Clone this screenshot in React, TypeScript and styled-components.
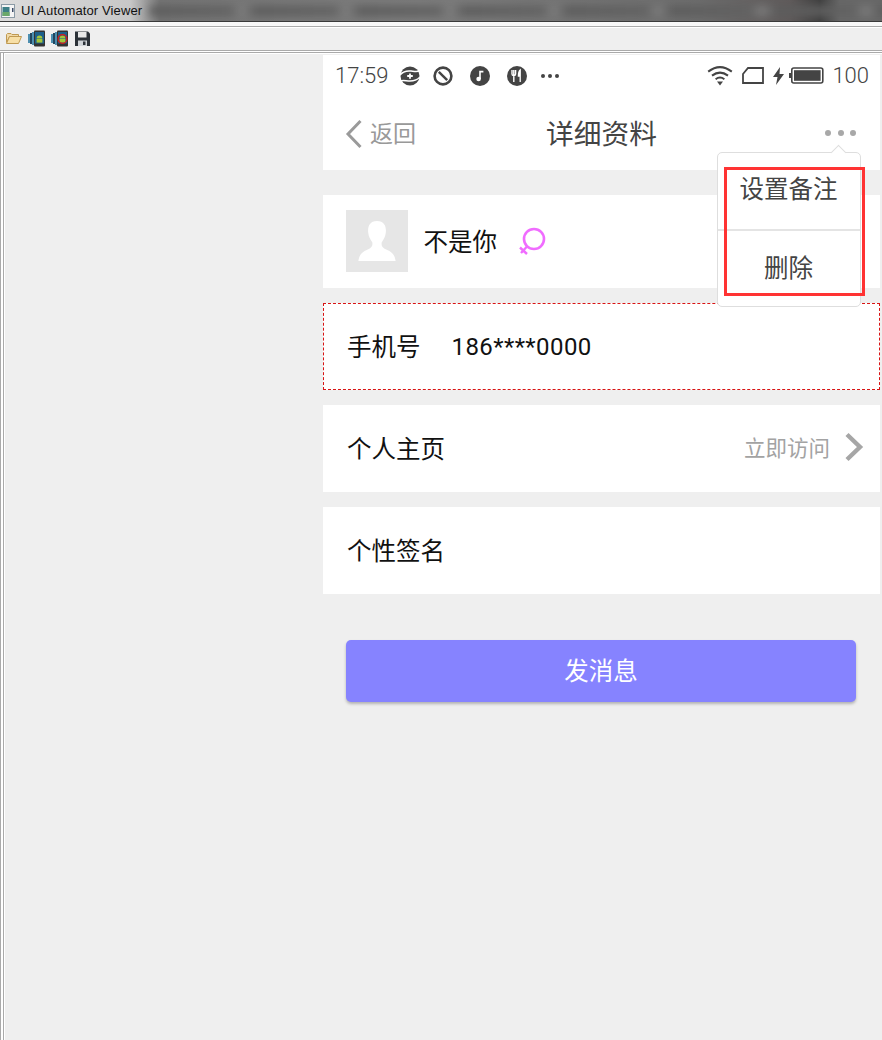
import * as React from 'react'
import styled, { createGlobalStyle } from 'styled-components'

const GlobalStyle = createGlobalStyle`
  html, body {
    margin: 0;
    padding: 0;
    background: #efefef;
  }
  body {
    font-family: Roboto, "Noto Sans CJK SC", sans-serif;
    overflow: hidden;
  }
`

function WindowIcon() {
  return (
    <svg width="14" height="14" viewBox="0 0 14 14">
      <rect x="0.5" y="0.5" width="13" height="13" fill="#f4f4f4" stroke="#8a9aa5" />
      <rect x="1.5" y="3" width="7" height="9" fill="#3d7f86" />
      <rect x="1.5" y="8" width="7" height="4" fill="#6aa86a" />
      <rect x="11" y="4" width="1.5" height="4" fill="#3a4a66" />
    </svg>
  )
}

function FolderIcon() {
  return (
    <svg width="16" height="11" viewBox="0 0 16 11">
      <path d="M0.5 1.5 L1.5 0.5 H5 L6 1.5 H12.5 V3.5 H3.5 L0.5 9.5 Z" fill="#f0d9a8" stroke="#c09a52" strokeWidth="1" />
      <path d="M0.5 10.5 L3.5 3.5 H15.5 L12.5 10.5 Z" fill="#f7dfa6" stroke="#c09a52" strokeWidth="1" />
    </svg>
  )
}

function DeviceIcon({ ring }: { ring?: boolean }) {
  return (
    <svg width="17" height="17" viewBox="0 0 17 17">
      <rect x="0" y="4" width="2" height="9" fill="#4d8fb0" />
      <rect x="2" y="3" width="2" height="11" fill="#23465e" />
      <rect x="4" y="2" width="2" height="13" fill="#4d8fb0" />
      <rect x="6" y="0.5" width="11" height="16" rx="1" fill="#333" />
      <rect x="7" y="2" width="9" height="11.5" fill="#1d5f8a" />
      <path d="M8.6 8.4 a2.9 2.9 0 0 1 5.8 0 Z" fill="#a4c639" />
      <rect x="8.6" y="9" width="5.8" height="3.6" fill="#a4c639" />
      {ring && <circle cx="11.5" cy="9" r="4.4" fill="none" stroke="#e01818" strokeWidth="1.2" />}
    </svg>
  )
}

function SaveIcon() {
  return (
    <svg width="15" height="15" viewBox="0 0 15 15">
      <path d="M0 0.5 H13 L15 2.5 V15 H0 Z" fill="#2c3238" />
      <rect x="3" y="1" width="8.5" height="5.5" fill="#e8e8e8" />
      <rect x="3" y="9.5" width="9" height="5.5" fill="#d0d4d8" />
      <rect x="8" y="10.5" width="2.5" height="3.5" fill="#2c3238" />
    </svg>
  )
}

function SyncIcon() {
  return (
    <svg width="20" height="20" viewBox="0 0 20 20">
      <circle cx="10" cy="10" r="9.5" fill="#444" />
      <path d="M0 9 C3 5 7 4.6 11 5 C15 5.4 18 6 20 4.6" fill="none" stroke="#fff" strokeWidth="1.5" />
      <path d="M0 15 C3 14 6 15 10 15 C14 15 17 14.6 20 11" fill="none" stroke="#fff" strokeWidth="1.5" />
      <path d="M10 7.4 V12.8 M7.2 10 H12.8" stroke="#fff" strokeWidth="1.8" />
    </svg>
  )
}

function BlockIcon() {
  return (
    <svg width="20" height="20" viewBox="0 0 20 20">
      <circle cx="10" cy="10" r="8.4" fill="none" stroke="#444" strokeWidth="2.6" />
      <path d="M5.8 5.8 L14.2 14.2" stroke="#444" strokeWidth="2.4" />
    </svg>
  )
}

function MusicIcon() {
  return (
    <svg width="20" height="20" viewBox="0 0 20 20">
      <circle cx="10" cy="10" r="10" fill="#444" />
      <circle cx="8.6" cy="13" r="2.3" fill="#fff" />
      <path d="M10 13 V5.6 H13.4" fill="none" stroke="#fff" strokeWidth="1.6" />
    </svg>
  )
}

function FoodIcon() {
  return (
    <svg width="20" height="20" viewBox="0 0 20 20">
      <circle cx="10" cy="10" r="10" fill="#444" />
      <path d="M6.8 4 V16 M5 4 V8 Q5 9.6 6.8 9.6 Q8.6 9.6 8.6 8 V4" fill="none" stroke="#fff" strokeWidth="1.4" />
      <path d="M13.2 16 V4 Q11.4 5.6 11.4 10 H13.2" fill="#fff" stroke="#fff" strokeWidth="1.3" />
    </svg>
  )
}

function WifiIcon() {
  return (
    <svg width="26" height="21" viewBox="0 0 26 21">
      <path d="M1.2 6.6 Q13 -2.4 24.8 6.6" fill="none" stroke="#444" strokeWidth="2" />
      <path d="M5 10.6 Q13 4.6 21 10.6" fill="none" stroke="#444" strokeWidth="2" />
      <path d="M8.6 14.2 Q13 11 17.4 14.2" fill="none" stroke="#444" strokeWidth="2" />
      <path d="M10 16.4 H16 L13 20.4 Z" fill="#444" />
    </svg>
  )
}

function SimIcon() {
  return (
    <svg width="22" height="17" viewBox="0 0 22 17">
      <path d="M6 1 H21 V16 H1 V7 Z" fill="none" stroke="#444" strokeWidth="1.8" />
    </svg>
  )
}

function BoltIcon() {
  return (
    <svg width="11" height="18" viewBox="0 0 11 18">
      <path d="M7 0 L0 10 H4.5 L3 18 L11 7 H6.5 Z" fill="#444" />
    </svg>
  )
}

function BatteryIcon() {
  return (
    <svg width="35" height="17" viewBox="0 0 35 17">
      <rect x="0" y="6" width="2" height="5" fill="#444" />
      <rect x="2.8" y="1" width="31" height="15" rx="2" fill="none" stroke="#444" strokeWidth="1.6" />
      <rect x="5" y="3.2" width="26.6" height="10.6" fill="#444" />
    </svg>
  )
}

function FemaleIcon() {
  return (
    <svg width="28" height="28" viewBox="0 0 28 28">
      <circle cx="16" cy="12" r="10" fill="none" stroke="#f06cff" strokeWidth="2.6" />
      <path d="M9 19.5 L3 26 M2 20.5 L9 27" fill="none" stroke="#f06cff" strokeWidth="2.4" />
    </svg>
  )
}

function AvatarFigure() {
  return (
    <svg width="38" height="41" viewBox="0 0 40 44">
      <path d="M20 0 C12 0 10 6 10.5 12 C11 17 13 20 15 23 C15.5 27 14 29 9 31 C4 33 1 36 0 43 H40 C39 36 36 33 31 31 C26 29 24.5 27 25 23 C27 20 29 17 29.5 12 C30 6 28 0 20 0 Z" fill="#fff" />
    </svg>
  )
}

export default function App() {
  return (
    <Page>
      <GlobalStyle />
      <TitleBar>
        <TitleBlur />
        <WindowIcon />
        <TitleText>UI Automator Viewer</TitleText>
      </TitleBar>
      <Toolbar>
        <ToolButton>
          <FolderIcon />
        </ToolButton>
        <ToolButton>
          <DeviceIcon />
        </ToolButton>
        <ToolButton>
          <DeviceIcon ring />
        </ToolButton>
        <ToolButton>
          <SaveIcon />
        </ToolButton>
      </Toolbar>
      <Workspace>
        <SidePane />
        <Phone>
          <Header>
            <StatusBar>
              <Clock>17:59</Clock>
              <StatusIcons>
                <SyncSlot>
                  <SyncIcon />
                </SyncSlot>
                <BlockIcon />
                <MusicIcon />
                <FoodIcon />
                <MoreDots>
                  <i />
                  <i />
                  <i />
                </MoreDots>
              </StatusIcons>
              <StatusRight>
                <WifiIcon />
                <SimIcon />
                <BoltIcon />
                <BatterySlot>
                  <BatteryIcon />
                </BatterySlot>
                <Level>100</Level>
              </StatusRight>
            </StatusBar>
            <NavBar>
              <BackLink>
                <svg width="18" height="30" viewBox="0 0 18 30">
                  <path d="M15.5 2 L3 15 L15.5 28" fill="none" stroke="#9a9a9a" strokeWidth="3" />
                </svg>
                <span>返回</span>
              </BackLink>
              <NavTitle>详细资料</NavTitle>
              <NavMenu>
                <i />
                <i />
                <i />
              </NavMenu>
            </NavBar>
          </Header>
          <List>
            <ProfileRow>
              <Avatar>
                <AvatarFigure />
              </Avatar>
              <Name>不是你</Name>
              <FemaleIcon />
            </ProfileRow>
            <Row $selected>
              <Label>手机号</Label>
              <PhoneNumber>186****0000</PhoneNumber>
            </Row>
            <Row>
              <Label>个人主页</Label>
              <Visit>
                <span>立即访问</span>
                <svg width="20" height="30" viewBox="0 0 20 30">
                  <path d="M3 2.5 L16 15 L3 27.5" fill="none" stroke="#a6a6a6" strokeWidth="4.4" />
                </svg>
              </Visit>
            </Row>
            <Row>
              <Label>个性签名</Label>
            </Row>
          </List>
          <SendButton>发消息</SendButton>
          <Popover>
            <PopoverItem $first>设置备注</PopoverItem>
            <PopoverItem>删除</PopoverItem>
          </Popover>
          <Highlight />
        </Phone>
      </Workspace>
    </Page>
  )
}

const Page = styled.div`
  width: 882px;
  height: 1040px;
  display: flex;
  flex-direction: column;
  overflow: hidden;
  background: #f8f8f8;
`

const TitleBar = styled.div`
  position: relative;
  height: 21px;
  flex: none;
  display: flex;
  align-items: center;
  gap: 6px;
  padding-left: 1px;
  overflow: hidden;
  background: linear-gradient(
    90deg,
    #dcdcdc 0,
    #c8c8c8 130px,
    #747474 160px,
    #7c7c7c 420px,
    #6c6c6c 700px,
    #5f5a5a 790px,
    #3f3f3f 820px,
    #686868 840px
  );
  border-bottom: 1px solid #3a3a3a;
`

const TitleBlur = styled.div`
  position: absolute;
  left: 150px;
  right: -10px;
  top: 6px;
  height: 10px;
  filter: blur(4px);
  background: repeating-linear-gradient(90deg, #5c5c5c 0, #626262 80px, #7e7e7e 92px, #626262 104px);
`

const TitleText = styled.span`
  position: relative;
  font: 13px "Liberation Sans", Arial, sans-serif;
  letter-spacing: 0.12px;
  color: #111;
`

const Toolbar = styled.div`
  height: 23px;
  flex: none;
  display: flex;
  align-items: center;
  gap: 6px;
  padding-left: 5px;
  margin-top: 4px;
  background: #efefef;
  border-top: 1px solid #aaa;
  box-shadow: inset 0 1px 0 #fff;
`

const ToolButton = styled.div`
  width: 17px;
  height: 17px;
  display: flex;
  align-items: center;
  justify-content: center;
`

const Workspace = styled.div`
  flex: 1;
  display: flex;
  min-height: 0;
  border-top: 1px solid #aaa;
  padding-top: 4px;
  background: #efefef;
  box-shadow: inset 0 1px 0 #fff, inset 0 2px 0 #aaa, inset 0 3px 0 #fff;
`

const SidePane = styled.div`
  width: 318px;
  flex: none;
  margin: -2px 4px 0 0;
  border-left: 1px solid #aaa;
  box-shadow: inset 2px 0 0 #fff, inset 3px 0 0 #aaa, inset 4px 0 0 #fff;
`

const Phone = styled.div`
  position: relative;
  width: 557px;
  flex: none;
  display: flex;
  flex-direction: column;
  background: #efefef;
`

const Header = styled.div`
  background: #fff;
`

const StatusBar = styled.div`
  height: 45px;
  display: flex;
  align-items: center;
  padding: 0 11px 4px 12px;
  box-sizing: border-box;
  color: #444;
  font-size: 22px;
`

const Clock = styled.span`
  width: 65px;
  font-weight: 300;
`

const StatusIcons = styled.div`
  display: flex;
  align-items: center;
  gap: 17px;
`

const SyncSlot = styled.div`
  display: flex;
  margin-right: -4px;
`

const MoreDots = styled.div`
  display: flex;
  gap: 3px;
  margin-left: -3px;

  i {
    width: 4px;
    height: 4px;
    border-radius: 50%;
    background: #444;
  }
`

const StatusRight = styled.div`
  margin-left: auto;
  display: flex;
  align-items: center;
  gap: 9px;
`

const BatterySlot = styled.div`
  display: flex;
  margin-left: -4px;
`

const Level = styled.span`
  margin-left: -1px;
  font-weight: 300;
  color: #444;
`

const NavBar = styled.div`
  position: relative;
  height: 70px;
  display: flex;
  align-items: center;
  justify-content: space-between;
  padding: 0 24px 2px 22px;
  box-sizing: border-box;
`

const BackLink = styled.div`
  display: flex;
  align-items: center;
  gap: 7px;
  color: #999;
  font-size: 23px;

  span {
    margin-top: -4px;
  }
`

const NavTitle = styled.div`
  position: absolute;
  left: 0;
  right: 0;
  margin-top: -4px;
  text-align: center;
  font-size: 27.7px;
  color: #444;
`

const NavMenu = styled.div`
  display: flex;
  gap: 6.5px;
  margin-bottom: 2px;

  i {
    width: 6px;
    height: 6px;
    border-radius: 50%;
    background: #a8a8a8;
  }
`

const List = styled.div`
  display: flex;
  flex-direction: column;
  gap: 15px;
  margin-top: 25px;
`

const ProfileRow = styled.div`
  height: 93px;
  display: flex;
  align-items: center;
  padding: 0 0 2px 23px;
  box-sizing: border-box;
  background: #fff;
`

const Avatar = styled.div`
  width: 62px;
  height: 62px;
  display: flex;
  align-items: flex-end;
  justify-content: center;
  padding-bottom: 10px;
  box-sizing: border-box;
  background: #e6e6e6;
`

const Name = styled.span`
  margin: 0 21px 0 15.5px;
  font-size: 24.5px;
  color: #111;
`

const Row = styled.div<{ $selected?: boolean }>`
  height: 87px;
  display: flex;
  align-items: center;
  padding: 0 16px 0 ${p => (p.$selected ? '23px' : '24px')};
  box-sizing: border-box;
  background: #fff;
  border: ${p => (p.$selected ? '1px dashed #d81414' : 'none')};
`

const Label = styled.span`
  margin-top: -2px;
  font-size: 24.5px;
  color: #111;
`

const PhoneNumber = styled.span`
  margin-left: 31px;
  font-size: 24px;
  letter-spacing: 0.4px;
  color: #111;
`

const Visit = styled.div`
  margin-left: auto;
  display: flex;
  align-items: center;
  gap: 14px;
  font-size: 21.5px;
  color: #a3a3a3;

  span {
    margin-top: -4px;
  }

  svg {
    margin-bottom: 4px;
  }
`

const SendButton = styled.button`
  width: 510px;
  height: 62px;
  margin: 46px 0 0 23px;
  padding: 0 0 4px;
  border: none;
  border-radius: 5px;
  background: #8683ff;
  box-shadow: 0 2px 3px rgba(0, 0, 0, 0.25);
  color: #fff;
  font: 24.5px Roboto, "Noto Sans CJK SC", sans-serif;
`

const Popover = styled.div`
  position: absolute;
  left: 393.5px;
  top: 97px;
  width: 144px;
  height: 155px;
  display: flex;
  flex-direction: column;
  box-sizing: border-box;
  background: #fff;
  border: 1px solid #dedede;
  border-radius: 5px;

  &::before {
    content: '';
    position: absolute;
    top: -6px;
    right: 16px;
    width: 10px;
    height: 10px;
    background: #fff;
    border-left: 1px solid #dedede;
    border-top: 1px solid #dedede;
    transform: rotate(45deg);
  }
`

const PopoverItem = styled.div<{ $first?: boolean }>`
  flex: ${p => (p.$first ? '0 0 78px' : '1')};
  display: flex;
  align-items: center;
  justify-content: center;
  position: relative;
  font-size: 24.5px;
  color: #444;
  padding-bottom: ${p => (p.$first ? '8px' : '4px')};
  box-sizing: border-box;
  border-bottom: ${p => (p.$first ? '2px solid #e4e4e4' : 'none')};
`

const Highlight = styled.div`
  position: absolute;
  left: 401px;
  top: 112px;
  width: 141px;
  height: 129px;
  box-sizing: border-box;
  border: 3px solid #ff3333;
`
